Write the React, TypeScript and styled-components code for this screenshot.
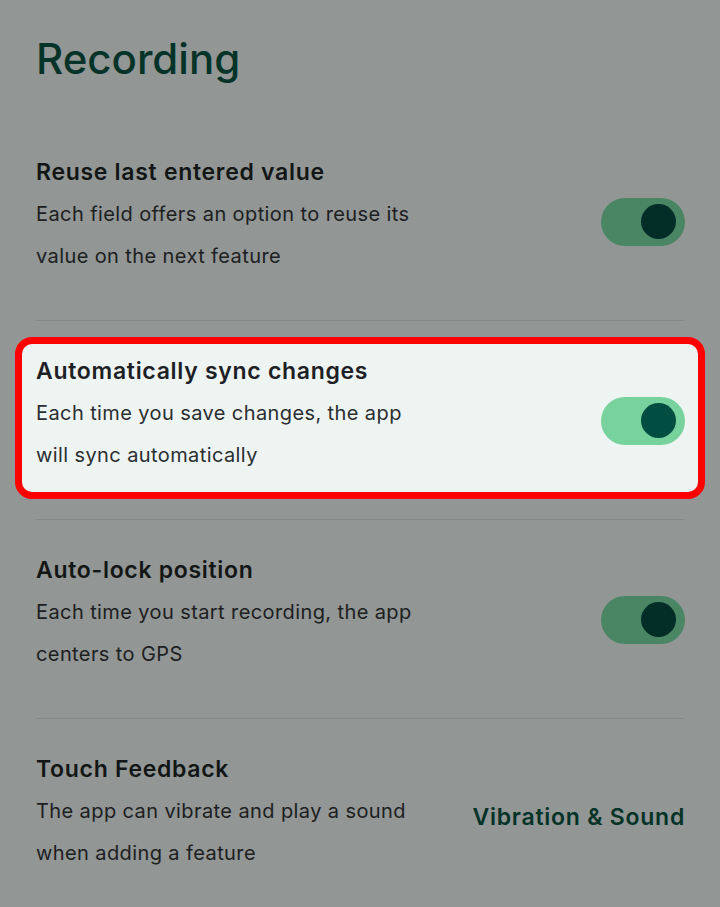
import React from 'react';
import styled, { createGlobalStyle } from 'styled-components';

const GlobalStyle = createGlobalStyle`
  html, body {
    margin: 0;
    padding: 0;
    background: #929695;
  }
  body {
    font-family: Inter, "Noto Sans", "Liberation Sans", sans-serif;
  }
`;

type Setting = {
  id: number;
  title: string;
  description: string[];
  control: 'toggle' | 'link';
  label?: string;
  highlight?: boolean;
};

const settings: Setting[] = [
  {
    id: 1,
    title: 'Reuse last entered value',
    description: ['Each field offers an option to reuse its', 'value on the next feature'],
    control: 'toggle',
  },
  {
    id: 2,
    title: 'Automatically sync changes',
    description: ['Each time you save changes, the app', 'will sync automatically'],
    control: 'toggle',
    highlight: true,
  },
  {
    id: 3,
    title: 'Auto-lock position',
    description: ['Each time you start recording, the app', 'centers to GPS'],
    control: 'toggle',
  },
  {
    id: 4,
    title: 'Touch Feedback',
    description: ['The app can vibrate and play a sound', 'when adding a feature'],
    control: 'link',
    label: 'Vibration & Sound',
  },
];

const App = () => {
  return (
    <>
      <GlobalStyle />
      <Page>
        <Heading>Recording</Heading>
        <List>
          {settings.map((item, index) => (
            <React.Fragment key={item.id}>
              {index > 0 && <Divider />}
              <Row $highlight={item.highlight}>
                <TextBlock>
                  <ItemTitle $highlight={item.highlight}>{item.title}</ItemTitle>
                  <Description $highlight={item.highlight}>
                    {item.description.map((line) => (
                      <span key={line}>{line}</span>
                    ))}
                  </Description>
                </TextBlock>
                {item.control === 'toggle' ? (
                  <Track $highlight={item.highlight}>
                    <Knob $highlight={item.highlight} />
                  </Track>
                ) : (
                  <LinkText>{item.label}</LinkText>
                )}
              </Row>
            </React.Fragment>
          ))}
        </List>
      </Page>
    </>
  );
};

export default App;

const Page = styled.div`
  width: 720px;
  min-height: 907px;
  box-sizing: border-box;
  padding: 35px 36px 0;
  overflow: hidden;
`;

const Heading = styled.h1`
  margin: 0;
  font-size: 42px;
  line-height: 48px;
  font-weight: 500;
  color: #053328;
`;

const List = styled.div`
  display: flex;
  flex-direction: column;
  margin-top: 55px;
`;

const Divider = styled.div`
  height: 1px;
  background: #848887;
  margin: 20px 0 16px;
`;

const Row = styled.div<{ $highlight?: boolean }>`
  display: flex;
  align-items: center;
  justify-content: space-between;
  margin: 0 -21px;
  padding: 6px 13px 16px 14px;
  border: 7px solid ${(p) => (p.$highlight ? '#ff0000' : 'transparent')};
  border-radius: 17px;
  background: ${(p) => (p.$highlight ? '#eef4f1' : 'transparent')};
`;

const TextBlock = styled.div`
  display: flex;
  flex-direction: column;
`;

const ItemTitle = styled.div<{ $highlight?: boolean }>`
  font-size: 23px;
  line-height: 42px;
  font-weight: 600;
  letter-spacing: 0.7px;
  color: ${(p) => (p.$highlight ? '#1d2125' : '#121615')};
`;

const Description = styled.div<{ $highlight?: boolean }>`
  display: flex;
  flex-direction: column;
  font-size: 20px;
  line-height: 42px;
  font-weight: 400;
  letter-spacing: 0.4px;
  color: ${(p) => (p.$highlight ? '#2a2e31' : '#1c201f')};
`;

const Track = styled.div<{ $highlight?: boolean }>`
  width: 84px;
  height: 48px;
  margin-top: 15px;
  border-radius: 24px;
  flex-shrink: 0;
  box-sizing: border-box;
  padding-right: 9px;
  display: flex;
  align-items: center;
  justify-content: flex-end;
  background: ${(p) => (p.$highlight ? '#77d29d' : '#4a8664')};
`;

const Knob = styled.div<{ $highlight?: boolean }>`
  width: 35px;
  height: 35px;
  border-radius: 50%;
  background: ${(p) => (p.$highlight ? '#024d42' : '#032e27')};
`;

const LinkText = styled.div`
  font-size: 23px;
  line-height: 28px;
  font-weight: 600;
  letter-spacing: 0.75px;
  color: #053328;
  margin-top: 12px;
  white-space: nowrap;
`;
